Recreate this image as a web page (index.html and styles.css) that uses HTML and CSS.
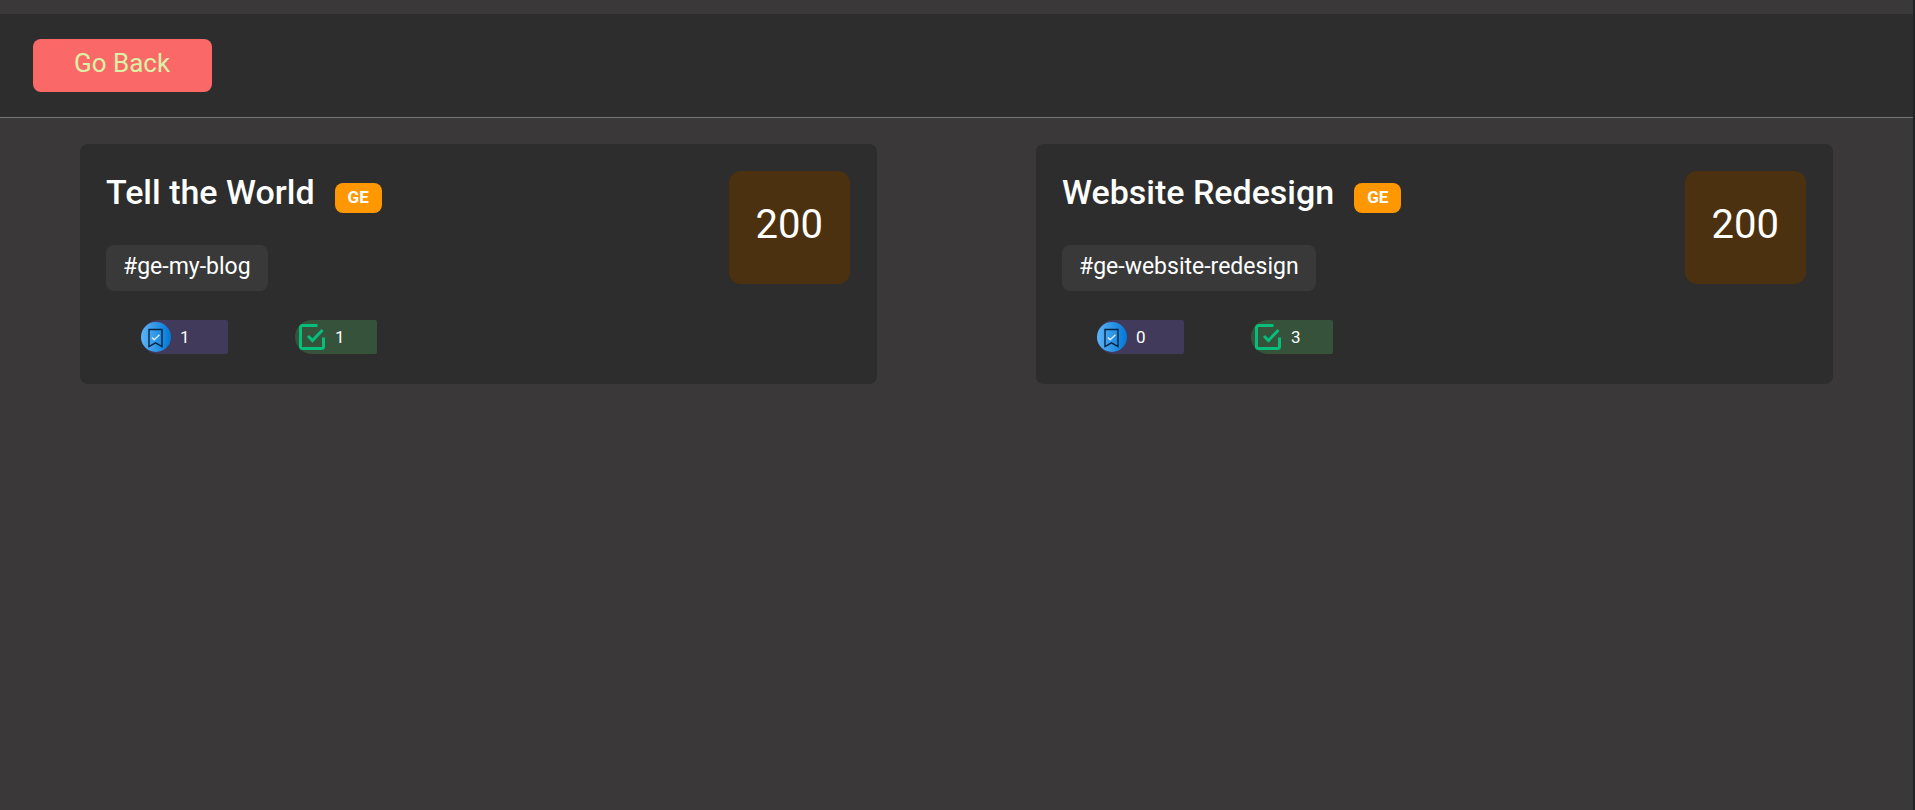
FILE: index.html
```
<!DOCTYPE html>
<html lang="en">
<head>
<meta charset="utf-8">
<title>Projects</title>
<link rel="stylesheet" href="styles.css">
</head>
<body>
<svg class="defs" width="0" height="0" aria-hidden="true">
  <defs>
    <linearGradient id="blue" x1="0" y1="0" x2="1" y2="0">
      <stop offset="0" stop-color="#5eb3f6"/>
      <stop offset="1" stop-color="#0078d7"/>
    </linearGradient>
    <symbol id="saved" viewBox="0 0 30 30">
      <circle cx="15" cy="15" r="15" fill="url(#blue)"/>
      <path d="M8 7.500h13v17L14.500 20.800 8 24.500z" fill="none" stroke="#06243f" stroke-width="1.400"/>
      <path d="M11 15.500l2.200 2.300 5.300-5" fill="none" stroke="#d6f0ff" stroke-width="1.300"/>
    </symbol>
    <symbol id="done" viewBox="0 0 26 26">
      <path d="M18.500 1.500H3.500a2 2 0 0 0-2 2v19a2 2 0 0 0 2 2h19a2 2 0 0 0 2-2v-9" fill="none" stroke="#05be7c" stroke-width="3"/>
      <path d="M9 12l4.500 4.500L23.500 6" fill="none" stroke="#05be7c" stroke-width="3"/>
    </symbol>
  </defs>
</svg>
<header class="topbar">
  <button class="back" type="button">Go Back</button>
</header>
<main class="projects">
  <article class="card">
    <div class="info">
      <div class="heading"><h2 class="title">Tell the World</h2><span class="badge">GE</span></div>
      <span class="channel">#ge-my-blog</span>
      <div class="counts">
        <span class="count saved"><svg class="disc" aria-hidden="true"><use href="#saved"/></svg>1</span>
        <span class="count done"><svg class="box" aria-hidden="true"><use href="#done"/></svg>1</span>
      </div>
    </div>
    <div class="points">200</div>
  </article>
  <article class="card">
    <div class="info">
      <div class="heading"><h2 class="title">Website Redesign</h2><span class="badge">GE</span></div>
      <span class="channel">#ge-website-redesign</span>
      <div class="counts">
        <span class="count saved"><svg class="disc" aria-hidden="true"><use href="#saved"/></svg>0</span>
        <span class="count done"><svg class="box" aria-hidden="true"><use href="#done"/></svg>3</span>
      </div>
    </div>
    <div class="points">200</div>
  </article>
</main>
</body>
</html>
```
FILE: styles.css
```
* {
  box-sizing: border-box;
}

body {
  margin: 0;
  min-height: 100vh;
  padding-top: 14px;
  border-right: 2px solid #1f2226;
  background: #3b3839;
  color: #fff;
  font-family: Roboto, "Noto Sans", sans-serif;
}

.defs {
  position: absolute;
}

.topbar {
  padding: 25px 33px;
  border-bottom: 1px solid #777;
  background: #2d2d2d;
}

.back {
  display: block;
  padding: 8px 42px 13px 41px;
  border: 0;
  border-radius: 8px;
  background: #fb6868;
  color: #d9f2a5;
  font: 400 26px/32px Roboto, "Noto Sans", sans-serif;
}

.projects {
  display: grid;
  grid-template-columns: 1fr 1fr;
  gap: 159px;
  padding: 26px 80px;
}

.card {
  display: flex;
  align-items: flex-start;
  justify-content: space-between;
  padding: 27px 27px 30px 26px;
  border-radius: 8px;
  background: #2d2d2d;
}

.heading {
  display: flex;
  align-items: flex-start;
  gap: 20px;
}

.title {
  margin: 0;
  font-size: 34px;
  line-height: 42px;
  font-weight: 500;
}

.badge {
  margin-top: 12px;
  padding: 0 13px 2px;
  border-radius: 8px;
  background: #ff9800;
  font-size: 17px;
  line-height: 28px;
  font-weight: 700;
}

.channel {
  display: inline-block;
  margin-top: 32px;
  padding: 0 17px 2px;
  border-radius: 8px;
  background: #393939;
  font-size: 23px;
  line-height: 44px;
}

.counts {
  display: flex;
  gap: 67px;
  margin: 29px 0 0 35px;
}

.count {
  display: flex;
  align-items: center;
  height: 34px;
  border-radius: 17px 2px 2px 17px;
  font-size: 17px;
}

.saved {
  width: 87px;
  gap: 9px;
  background: #423a5b;
}

.done {
  width: 82px;
  gap: 10px;
  padding-left: 4px;
  background: #36523a;
}

.disc {
  width: 30px;
  height: 30px;
}

.box {
  width: 26px;
  height: 26px;
}

.points {
  padding: 30px 27px 36px;
  border-radius: 12px;
  background: #4b310f;
  font-size: 40px;
  line-height: 47px;
}
```
